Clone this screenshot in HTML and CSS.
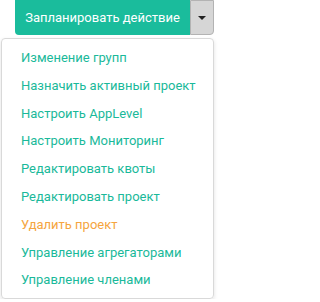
FILE: index.html
```
<!DOCTYPE html>
<html>
<head>
<meta charset="utf-8">
<link rel="stylesheet" href="styles.css">
</head>
<body>
<div class="wrap">
  <div class="btn-group">
    <button class="btn-main">Запланировать действие</button>
    <button class="btn-toggle"><span class="caret"></span></button>
  </div>
  <ul class="menu">
    <li class="item">Изменение групп</li>
    <li class="item">Назначить активный проект</li>
    <li class="item">Настроить AppLevel</li>
    <li class="item">Настроить Мониторинг</li>
    <li class="item">Редактировать квоты</li>
    <li class="item">Редактировать проект</li>
    <li class="item danger">Удалить проект</li>
    <li class="item">Управление агрегаторами</li>
    <li class="item">Управление членами</li>
  </ul>
</div>
</body>
</html>
```
FILE: styles.css
```
html, body {
  margin: 0;
  padding: 0;
  background: #ffffff;
}
.wrap {
  width: 217px;
  font-family: Roboto, "Liberation Sans", sans-serif;
  font-size: 13px;
}
.btn-group {
  display: flex;
  justify-content: flex-end;
  padding-right: 3px;
  height: 35px;
}
.btn-main {
  width: 175px;
  height: 35px;
  margin: 0;
  border: none;
  border-radius: 0 0 0 4px;
  background: #1abc9c;
  color: #ffffff;
  font-family: inherit;
  font-size: 13px;
  padding: 0;
}
.btn-toggle {
  width: 24px;
  height: 35px;
  margin: 0;
  border: 1px solid #b3b3b3;
  border-radius: 0 0 4px 0;
  background: #d6d6d6;
  display: flex;
  align-items: center;
  justify-content: center;
  padding: 0;
}
.caret {
  width: 0;
  height: 0;
  border-left: 4px solid transparent;
  border-right: 4px solid transparent;
  border-top: 4px solid #222;
}
.menu {
  list-style: none;
  margin: 3px 3px 0 1px;
  padding: 5px 0 4px;
  border: 1px solid #d9d9d9;
  border-radius: 4px;
  box-shadow: 0 2px 4px rgba(0,0,0,0.12);
}
.item {
  height: 27.8px;
  line-height: 27.8px;
  padding-left: 19px;
  color: #1ab99a;
  white-space: nowrap;
}
.item.danger {
  color: #f5a540;
}
```
